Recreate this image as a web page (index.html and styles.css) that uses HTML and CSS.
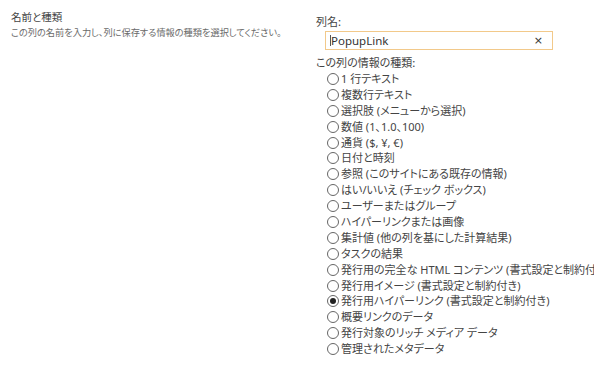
FILE: index.html
```html
<!DOCTYPE html>
<html lang="ja">
<head>
<meta charset="utf-8">
<link rel="stylesheet" href="styles.css">
</head>
<body>
<div class="page">
  <div class="left">
    <div class="section-title">名前と種類</div>
    <div class="section-desc">この列の名前を入力し、列に保存する情報の種類を選択してください。</div>
  </div>
  <div class="right">
    <div class="label">列名:</div>
    <div class="input">
      <span class="caret"></span><span class="input-text">PopupLink</span>
      <span class="clear">×</span>
    </div>
    <div class="label label-type">この列の情報の種類:</div>
    <ul class="options">
      <li><span class="radio"></span>1 行テキスト</li>
      <li><span class="radio"></span>複数行テキスト</li>
      <li><span class="radio"></span>選択肢 (メニューから選択)</li>
      <li><span class="radio"></span>数値 (1、1.0、100)</li>
      <li><span class="radio"></span>通貨 ($, ¥, €)</li>
      <li><span class="radio"></span>日付と時刻</li>
      <li><span class="radio"></span>参照 (このサイトにある既存の情報)</li>
      <li><span class="radio"></span>はい/いいえ (チェック ボックス)</li>
      <li><span class="radio"></span>ユーザーまたはグループ</li>
      <li><span class="radio"></span>ハイパーリンクまたは画像</li>
      <li><span class="radio"></span>集計値 (他の列を基にした計算結果)</li>
      <li><span class="radio"></span>タスクの結果</li>
      <li><span class="radio"></span>発行用の完全な HTML コンテンツ (書式設定と制約付き)</li>
      <li><span class="radio"></span>発行用イメージ (書式設定と制約付き)</li>
      <li><span class="radio checked"></span>発行用ハイパーリンク (書式設定と制約付き)</li>
      <li><span class="radio"></span>概要リンクのデータ</li>
      <li><span class="radio"></span>発行対象のリッチ メディア データ</li>
      <li><span class="radio"></span>管理されたメタデータ</li>
    </ul>
  </div>
</div>
</body>
</html>
```
FILE: styles.css
```css
html, body {
  margin: 0;
  padding: 0;
  background: #ffffff;
  overflow: hidden;
}
.page {
  display: flex;
  font-family: "Noto Sans CJK JP", "Noto Sans", sans-serif;
  font-feature-settings: "palt" 1;
  color: #444444;
}
.left {
  width: 305px;
  padding: 9px 0 0 11px;
  flex: none;
}
.section-title {
  font-size: 10.5px;
  line-height: 16px;
  color: #444444;
}
.section-desc {
  font-size: 9.2px;
  line-height: 14px;
  color: #6a6a6a;
  margin-top: 0;
}
.right {
  padding-top: 13px;
  flex: 1;
  white-space: nowrap;
  min-width: 0;
  overflow: hidden;
}
.label {
  font-size: 11px;
  line-height: 16px;
  color: #444444;
}
.input {
  margin: 2px 0 0 9px;
  width: 222px;
  height: 17px;
  border: 1px solid #f2c98a;
  display: flex;
  align-items: center;
  padding: 0 0 0 4px;
  box-sizing: content-box;
}
.caret {
  width: 1px;
  height: 11px;
  background: #555555;
}
.input-text {
  font-family: "Noto Sans", "Segoe UI", sans-serif;
  font-size: 11.5px;
  color: #333333;
  line-height: 17px;
}
.clear {
  margin-left: auto;
  margin-right: 9px;
  font-family: "DejaVu Sans", sans-serif;
  font-size: 11px;
  color: #333333;
}
.label-type {
  margin-top: 4px;
}
.options {
  list-style: none;
  margin: 1px 0 0 0;
  padding: 0 0 0 11px;
}
.options li {
  font-family: "Noto Sans", "Noto Sans CJK JP", sans-serif;
  font-size: 11px;
  line-height: 15.9px;
  height: 15.9px;
  display: flex;
  align-items: center;
  color: #444444;
}
.radio {
  width: 10px;
  height: 10px;
  border: 1px solid #666666;
  border-radius: 50%;
  background: #ffffff;
  margin-right: 2px;
  flex: none;
  display: flex;
  align-items: center;
  justify-content: center;
}
.radio.checked::after {
  content: "";
  width: 6px;
  height: 6px;
  border-radius: 50%;
  background: #222222;
}
```
